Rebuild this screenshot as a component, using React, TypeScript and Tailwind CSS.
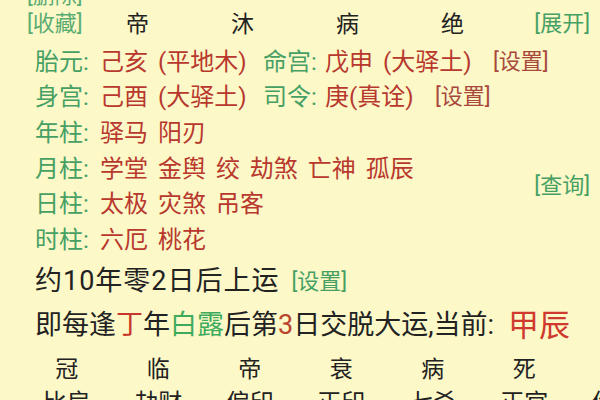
import React from 'react';

const green = 'text-[#46a064]';
const red = 'text-[#b8382e]';
const brown = 'text-[#a8483c]';

function InfoRow({ label, children }: { label: string; children: React.ReactNode }) {
  return (
    <div className="flex h-[35.6px] items-center">
      <span className={`w-[65px] shrink-0 ${green}`}>{label}</span>
      {children}
    </div>
  );
}

const changsheng = ['冠', '临', '帝', '衰', '病', '死', '墓'];
const shishen = ['比肩', '劫财', '偏印', '正印', '七杀', '正官', '伤官'];

export default function App() {
  return (
    <div className="relative h-[400px] w-[600px] overflow-hidden bg-[#fcf8c8] font-[Roboto,'Noto_Sans_CJK_SC',sans-serif] leading-none text-[#222]">
      <div className="-mt-[14px]">
        {/* top buttons + 十二长生 */}
        <div className="flex h-[20px] items-center pl-[27px] text-[22px]">
          <span className="text-[#5aac72]">[删除]</span>
        </div>
        <div className="flex h-[36px] items-center">
          <span className="w-[85px] shrink-0 pl-[27px] text-[22px] text-[#5aac72]">[收藏]</span>
          <div className="grid grid-cols-[repeat(4,105px)] text-[23px]">
            {['帝', '沐', '病', '绝'].map((c, i) => (
              <span key={i} className="text-center">{c}</span>
            ))}
          </div>
          <span className={`ml-auto pr-[10px] text-[22px] ${green}`}>[展开]</span>
        </div>

        <div className="mt-[2px] pl-[35px] text-[24px]">
          <InfoRow label="胎元:">
            <span className={`w-[163px] shrink-0 ${red} [word-spacing:4px]`}>己亥 (平地木)</span>
            <span className={`w-[62px] shrink-0 ${green}`}>命宫:</span>
            <span className={`w-[168px] shrink-0 ${red} [word-spacing:4px]`}>戊申 (大驿土)</span>
            <span className={`text-[22px] ${brown}`}>[设置]</span>
          </InfoRow>
          <InfoRow label="身宫:">
            <span className={`w-[163px] shrink-0 ${red} [word-spacing:4px]`}>己酉 (大驿土)</span>
            <span className={`w-[62px] shrink-0 ${green}`}>司令:</span>
            <span className={`w-[110px] shrink-0 ${red}`}>庚(真诠)</span>
            <span className={`text-[22px] ${brown}`}>[设置]</span>
          </InfoRow>

          <div className="flex items-center">
            <div className={`flex-1 ${red} [word-spacing:4px]`}>
              <InfoRow label="年柱:"><span>驿马 阳刃</span></InfoRow>
              <InfoRow label="月柱:"><span>学堂 金舆 绞 劫煞 亡神 孤辰</span></InfoRow>
              <InfoRow label="日柱:"><span>太极 灾煞 吊客</span></InfoRow>
              <InfoRow label="时柱:"><span>六厄 桃花</span></InfoRow>
            </div>
            <span className={`pr-[10px] text-[22px] ${green}`}>[查询]</span>
          </div>

          {/* 起运 */}
          <div className="mt-[2px] flex h-[44px] items-center text-[27px]">
            <span className="tracking-[1px]">约10年零2日后上运</span>
            <span className={`ml-[12px] text-[22px] ${green}`}>[设置]</span>
          </div>
          <div className="flex h-[44px] items-center whitespace-nowrap text-[27px]">
            <span>即每逢</span>
            <span className="text-[#c8362c]">丁</span>
            <span>年</span>
            <span className="text-[#3eaa5c]">白露</span>
            <span>后第</span>
            <span className="text-[#b8442e]">3</span>
            <span>日交脱大运,当前:</span>
            <span className="ml-[14px] text-[31px] text-[#d03a2e]">甲辰</span>
          </div>
        </div>

        {/* 大运表 */}
        <div className="mt-[6px] grid grid-cols-[repeat(7,91.5px)] grid-rows-[32px_34px] pl-[21px]">
          {changsheng.map((c, i) => (
            <span key={i} className="flex items-center justify-center text-[23px]">{c}</span>
          ))}
          {shishen.map((c, i) => (
            <span key={i} className="flex items-center justify-center text-[24px]">{c}</span>
          ))}
        </div>
      </div>
    </div>
  );
}
